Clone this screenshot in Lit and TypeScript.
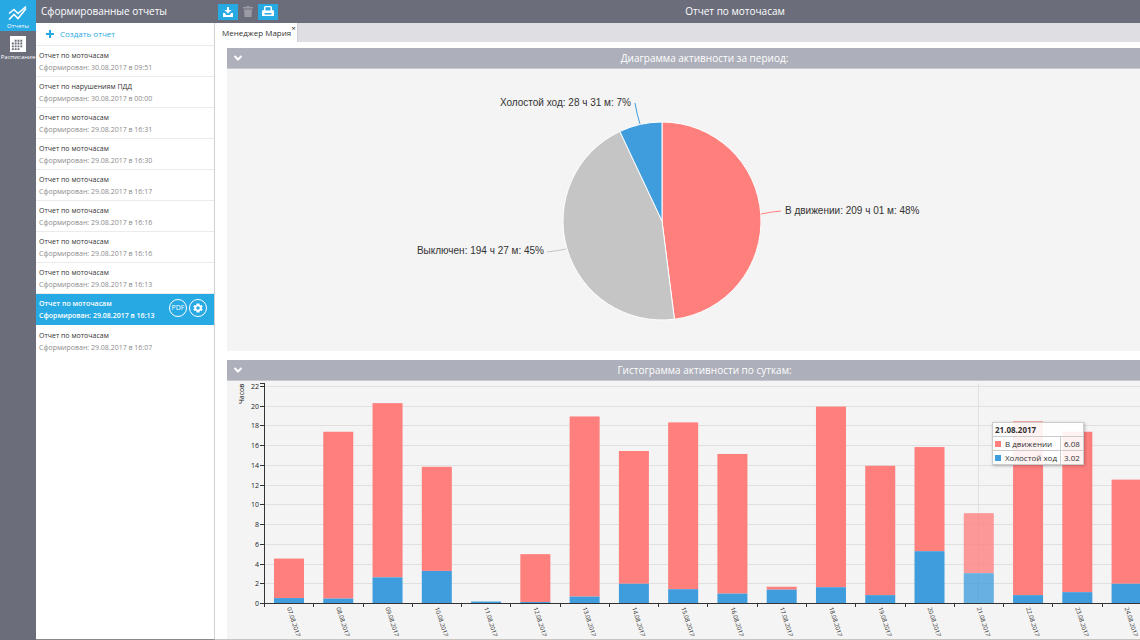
import { LitElement, html, svg, css } from "lit";
import { customElement, state } from "lit/decorators.js";
import { classMap } from "lit/directives/class-map.js";

interface Report {
  title: string;
  date: string;
}

const REPORTS: Report[] = [
  { title: "Отчет по моточасам", date: "30.08.2017 в 09:51" },
  { title: "Отчет по нарушениям ПДД", date: "30.08.2017 в 00:00" },
  { title: "Отчет по моточасам", date: "29.08.2017 в 16:31" },
  { title: "Отчет по моточасам", date: "29.08.2017 в 16:30" },
  { title: "Отчет по моточасам", date: "29.08.2017 в 16:17" },
  { title: "Отчет по моточасам", date: "29.08.2017 в 16:16" },
  { title: "Отчет по моточасам", date: "29.08.2017 в 16:16" },
  { title: "Отчет по моточасам", date: "29.08.2017 в 16:13" },
  { title: "Отчет по моточасам", date: "29.08.2017 в 16:13" },
  { title: "Отчет по моточасам", date: "29.08.2017 в 16:07" },
];

/* day of August 2017, total hours, idle hours */
const DAYS: [string, number, number][] = [
  ["07", 4.5, 0.5],
  ["08", 17.35, 0.45],
  ["09", 20.25, 2.6],
  ["10", 13.8, 3.25],
  ["11", 0.15, 0.15],
  ["12", 4.95, 0.1],
  ["13", 18.9, 0.65],
  ["14", 15.4, 1.95],
  ["15", 18.3, 1.4],
  ["16", 15.1, 0.95],
  ["17", 1.65, 1.35],
  ["18", 19.9, 1.6],
  ["19", 13.9, 0.8],
  ["20", 15.8, 5.25],
  ["21", 9.1, 3.02],
  ["22", 18.4, 0.8],
  ["23", 17.35, 1.1],
  ["24", 12.5, 1.95],
];

@customElement("activity-pie")
export class ActivityPie extends LitElement {
  static styles = css`
    :host { display: block; }
    svg { display: block; width: 100%; height: 282px; }
    text { font: 10px "Liberation Sans", Arial, sans-serif; fill: #333; }
    .slice { stroke: #fff; stroke-width: 1; }
    .lead { fill: none; stroke-width: 1; }
  `;

  private slice(from: number, to: number, color: string) {
    const r = 99;
    const point = (share: number) => {
      const a = share * 2 * Math.PI;
      return `${(r * Math.sin(a)).toFixed(2)} ${(-r * Math.cos(a)).toFixed(2)}`;
    };
    const large = to - from > 0.5 ? 1 : 0;
    return svg`<path class="slice" fill=${color}
      d="M0 0L${point(from)}A${r} ${r} 0 ${large} 1 ${point(to)}Z"></path>`;
  }

  render() {
    return html`
      <svg viewBox="-435 -152 913 282" preserveAspectRatio="xMidYMid meet" role="img"
        aria-label="Диаграмма активности за период">
        ${this.slice(0, 0.48, "#ff7f7d")}
        ${this.slice(0.48, 0.93, "#c5c5c5")}
        ${this.slice(0.93, 1, "#409ddd")}
        <path class="lead" stroke="#ff7f7d" d="M99 -7Q108 -9 119 -10"></path>
        <path class="lead" stroke="#c5c5c5" d="M-96 28Q-106 30 -115 31"></path>
        <path class="lead" stroke="#409ddd" d="M-22 -97Q-25 -106 -27 -118"></path>
        <text x="123" y="-7">В движении: 209 ч 01 м: 48%</text>
        <text x="-118" y="33" text-anchor="end">Выключен: 194 ч 27 м: 45%</text>
        <text x="-31" y="-115" text-anchor="end">Холостой ход: 28 ч 31 м: 7%</text>
      </svg>
    `;
  }
}

@customElement("activity-histogram")
export class ActivityHistogram extends LitElement {
  static styles = css`
    :host { display: block; position: relative; overflow: hidden; }
    svg { display: block; }
    text { font: 7px "Open Sans", sans-serif; fill: #222; }
    .date { font-size: 6px; }
    .grid { stroke: #e0e0e0; stroke-width: 1; }
    .axis { fill: none; stroke: #333; stroke-width: 1; shape-rendering: crispEdges; }
    .moving { fill: #ff7f7d; }
    .idle { fill: #409ddd; }
    .hover { opacity: 0.78; }
    .tip {
      position: absolute;
      left: 765px;
      top: 41px;
      border-collapse: collapse;
      background: rgba(255, 255, 255, 0.9);
      box-shadow: 1px 1px 3px rgba(0, 0, 0, 0.25);
      font: 8px/12px "Open Sans", sans-serif;
      color: #333;
    }
    .tip th, .tip td { border: 1px solid #ccc; padding: 0 3px 0 2px; text-align: left; height: 13px; white-space: nowrap; font-weight: 400; }
    .tip td { padding: 0 3px; }
    .tip thead th { font-weight: 700; }
    .swatch { display: inline-block; width: 6px; height: 6px; margin-right: 4px; }
    .red { background: #ff7f7d; }
    .blue { background: #409ddd; }
  `;

  render() {
    const left = 37;
    const base = 222;
    const band = 49.27;
    const unit = 9.87;
    const width = left + band * DAYS.length + 20;
    const y = (v: number) => base - v * unit;
    const ticks = Array.from({ length: 12 }, (_, i) => i * 2);
    return html`
      <svg width=${width} height="258" role="img" aria-label="Гистограмма активности по суткам">
        ${ticks.slice(1).map((t) => svg`<line class="grid" x1=${left} x2=${width} y1=${Math.round(y(t)) + 0.5} y2=${Math.round(y(t)) + 0.5}></line>`)}
        <line class="grid" x1=${left + band * 14.5} x2=${left + band * 14.5} y1="2" y2=${base}></line>
        ${DAYS.map(([day, total, idle], i) => {
          const x = left + i * band + 10;
          return svg`
            <g class=${day === "21" ? "hover" : ""}>
              <rect class="moving" x=${x} width="30" y=${y(total)} height=${(total - idle) * unit}></rect>
              <rect class="idle" x=${x} width="30" y=${y(idle)} height=${idle * unit}></rect>
            </g>
            <text class="date" transform="translate(${x + 13} ${base + 5}) rotate(72)">${day}.08.2017</text>`;
        })}
        ${ticks.map((t) => svg`
          <path class="axis" d="M${left - 4} ${Math.round(y(t)) + 0.5}H${left}"></path>
          <text x=${left - 5} y=${y(t) + 3} text-anchor="end">${t}</text>`)}
        <path class="axis" d="M${left - 4} 2.5H${left + 0.5}V${base + 0.5}H${width}"></path>
        ${DAYS.map((_, i) => svg`<path class="axis" d="M${Math.round(left + i * band) + 0.5} ${base}v4"></path>`)}
        <text transform="translate(17 23) rotate(-90)">Часов</text>
      </svg>
      <table class="tip">
        <thead><tr><th colspan="2">21.08.2017</th></tr></thead>
        <tbody>
          <tr><th scope="row"><span class="swatch red"></span>В движении</th><td>6.08</td></tr>
          <tr><th scope="row"><span class="swatch blue"></span>Холостой ход</th><td>3.02</td></tr>
        </tbody>
      </table>
    `;
  }
}

@customElement("app-root")
export class AppRoot extends LitElement {
  @state() private selected = 8;

  static styles = css`
    :host { display: block; height: 100vh; overflow: hidden; font: 10px/15px "Open Sans", sans-serif; color: #333; background: #fff; }
    * { box-sizing: border-box; }
    button { border: 0; margin: 0; padding: 0; background: none; font: inherit; color: inherit; cursor: pointer; }
    a { color: inherit; text-decoration: none; }
    h1, h2, ul { margin: 0; padding: 0; font-size: inherit; font-weight: inherit; list-style: none; }
    svg { display: block; }
    .shell { display: grid; grid-template-columns: 36px 179px minmax(0, 1fr); height: 100%; }
    .rail { background: #6b6d7b; color: #fff; }
    .rail a { display: flex; flex-direction: column; align-items: center; height: 31px; padding-top: 5px; font-size: 6px; line-height: 8px; gap: 1px; white-space: nowrap; }
    .rail .on { background: #27a9e3; }
    .side { border-right: 1px solid #d0d0d4; border-bottom: 1px solid #8a8a8e; display: flex; flex-direction: column; }
    .bar { display: flex; align-items: center; height: 23px; background: #6b6d7b; color: #fff; }
    .side .bar { padding-left: 5px; margin-right: -1px; font-weight: 500; }
    .create { display: flex; align-items: center; gap: 5px; height: 23px; padding: 0 0 1px 9px; color: #27a9e3; font-size: 8px; border-bottom: 1px solid #ebebeb; }
    .item { display: flex; align-items: center; height: 31px; border-bottom: 1px solid #ebebeb; padding: 0 7px 0 3px; }
    .item:last-child { border-bottom: 0; }
    .pick { flex: 1; text-align: left; font-size: 7px; line-height: 12px; padding-top: 2px; }
    .name, .made { display: block; }
    .made { color: #8c8c8c; }
    .sel { background: #27a9e3; color: #fff; font-weight: 600; border-color: #27a9e3; }
    .sel .made { color: #fff; }
    .round { display: grid; place-items: center; width: 18px; height: 18px; margin: 0 0 2px 2px; border: 1px solid #fff; border-radius: 50%; font-size: 7px; line-height: 10px; font-weight: 500; }
    .main { display: flex; flex-direction: column; min-width: 0; border-bottom: 1px solid #c9c5c0; }
    .main .bar { padding-left: 3px; }
    .tool { display: grid; place-items: center; width: 20px; height: 16px; color: #9a9ba5; }
    .tool.blue { background: #27a9e3; color: #fff; }
    .title { flex: 1; text-align: center; padding-left: 52px; font-weight: 500; }
    .tabs { display: flex; height: 19px; background: #dfdfe3; }
    .tab { display: flex; background: #fff; padding: 0 1px 0 7px; font-size: 8px; line-height: 19px; border-right: 1px solid #d0d0d4; }
    .tab .close { line-height: 9px; height: 9px; }
    .body { flex: 1; min-height: 0; overflow: hidden; padding: 6px 0 0 12px; display: flex; flex-direction: column; gap: 9px; }
    .panel { background: #f4f4f4; }
    .head { display: flex; align-items: center; height: 21px; padding-left: 6px; background: #adafba; color: #fff; border-bottom: 1px solid #c8c9d0; }
    .head h2 { flex: 1; text-align: center; padding-left: 26px; font-weight: 500; }
  `;

  render() {
    return html`
      <div class="shell">
        <nav class="rail">
          <a href="#reports" class="on">
            <svg width="20" height="16" viewBox="0 0 20 16" fill="none" stroke="#fff" stroke-width="1.6">
              <path d="M1 8.500l5-4 4 4 8-7M1 14.500l5-5 4 4 8-10"></path>
            </svg>
            <span>Отчеты</span>
          </a>
          <a href="#schedule">
            <svg width="16" height="16" viewBox="0 0 17 17">
              <path fill="#fff" d="M0 0h17v17H0z"></path>
              <path stroke="#6b6d7b" stroke-width="2" stroke-dasharray="2 1" d="M5 5h9M2 8h12M2 11h12M2 14h9"></path>
            </svg>
            <span>Расписание</span>
          </a>
        </nav>
        <aside class="side">
          <h1 class="bar">Сформированные отчеты</h1>
          <button class="create">
            <svg width="10" height="10" viewBox="0 0 10 10" stroke="#27a9e3" stroke-width="2"><path d="M5 1v8M1 5h8"></path></svg>
            <span>Создать отчет</span>
          </button>
          <ul>
            ${REPORTS.map((r, i) => html`
              <li class=${classMap({ item: true, sel: i === this.selected })}>
                <button class="pick" @click=${() => (this.selected = i)}>
                  <span class="name">${r.title}</span>
                  <span class="made">Сформирован: ${r.date}</span>
                </button>
                ${i === this.selected
                  ? html`<button class="round">PDF</button>
                      <button class="round" aria-label="Настройки">
                        <svg width="12" height="12" viewBox="0 0 24 24" fill="#fff">
                          <path fill-rule="evenodd" d="M19.400 13c.1-.7.1-1.300 0-2l2.100-1.600-2-3.500-2.500 1a8 8 0 0 0-1.700-1L15 3H9l-.4 2.900a8 8 0 0 0-1.700 1l-2.400-1-2 3.500L4.600 11c-.1.7-.1 1.300 0 2l-2.100 1.600 2 3.500 2.500-1a8 8 0 0 0 1.700 1L9 21h6l.4-2.900a8 8 0 0 0 1.700-1l2.400 1 2-3.500zM12 15.500a3.500 3.500 0 1 1 0-7 3.500 3.500 0 0 1 0 7z"></path>
                        </svg>
                      </button>`
                  : ""}
              </li>`)}
          </ul>
        </aside>
        <main class="main">
          <header class="bar">
            <button class="tool blue" aria-label="Скачать">
              <svg width="12" height="10" viewBox="0 0 12 10" fill="#fff"><path d="M5 0h2v3h2.500L6 6.500 2.500 3H5zM1 6h2l1 2h4l1-2h2v4H1z"></path></svg>
            </button>
            <button class="tool" aria-label="Удалить">
              <svg width="10" height="11" viewBox="0 0 10 11" fill="currentColor"><path d="M3.500 0h3v1H10v1.500H0V1h3.500zM1 3.500h8L8.500 11h-7z"></path></svg>
            </button>
            <button class="tool blue" aria-label="Печать">
              <svg width="12" height="11" viewBox="0 0 12 11" fill="#fff"><path fill-rule="evenodd" d="M3 0h6l1 1v3h1l1 1v5H0V5l1-1h1V1zM3.500 1.200V4.500h5V1.200zM2.500 7v1.500h7V7z"></path></svg>
            </button>
            <div class="title">Отчет по моточасам</div>
          </header>
          <div class="tabs">
            <div class="tab"><span>Менеджер Мария</span><button class="close" aria-label="Закрыть">×</button></div>
          </div>
          <div class="body">
            <section class="panel">
              <div class="head">${this.chevron()}<h2>Диаграмма активности за период:</h2></div>
              <activity-pie></activity-pie>
            </section>
            <section class="panel">
              <div class="head">${this.chevron()}<h2>Гистограмма активности по суткам:</h2></div>
              <activity-histogram></activity-histogram>
            </section>
          </div>
        </main>
      </div>
    `;
  }

  private chevron() {
    return html`<button aria-label="Свернуть">
      <svg width="10" height="8" viewBox="0 0 10 8" fill="none" stroke="#fff" stroke-width="2"><path d="M1.500 2L5 5.500 8.500 2"></path></svg>
    </button>`;
  }
}
